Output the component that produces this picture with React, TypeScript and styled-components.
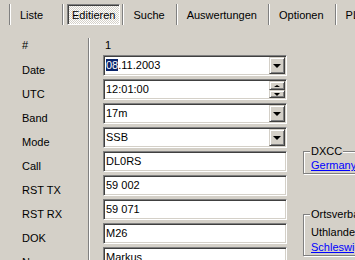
import * as React from 'react';
import styled, { createGlobalStyle } from 'styled-components';

const FACE = '#D4D0C8';
const SHADOW = '#808080';
const DARK = '#404040';

const GlobalStyle = createGlobalStyle`
  html, body {
    margin: 0;
    padding: 0;
    background: ${FACE};
  }
  body {
    font-family: "Liberation Sans", Arial, sans-serif;
    font-size: 11px;
    color: #000;
  }
`;

const Page = styled.div`
  width: 355px;
  height: 260px;
  overflow: hidden;
  background: ${FACE};
  display: flex;
  flex-direction: column;
`;

const TabBar = styled.div`
  flex: none;
  display: flex;
  align-items: stretch;
  height: 21px;
  margin: 4px 0 13px;
  padding-left: 9px;
  white-space: nowrap;
`;

const Tab = styled.div<{ $active?: boolean }>`
  flex: none;
  box-sizing: border-box;
  min-width: 53px;
  display: flex;
  align-items: stretch;
  border-left: 1px solid ${SHADOW};
  box-shadow: inset 1px 0 0 #fff;
  padding: ${p => (p.$active ? '0 2px 0 4px' : '0 11px 0 10px')};
`;

const TabLabel = styled.span<{ $active?: boolean }>`
  display: flex;
  align-items: center;
  ${p =>
    p.$active &&
    `
    padding: 0 4px;
    border: 1px solid;
    border-color: ${SHADOW} #fff #fff ${SHADOW};
    box-shadow: inset 1px 1px 0 ${DARK};
    background-color: #fff;
    background-image: conic-gradient(${FACE} 25%, #fff 0 50%, ${FACE} 0 75%, #fff 0);
    background-size: 2px 2px;
  `}
`;

const Form = styled.div`
  flex: none;
  display: grid;
  grid-template-columns: 89px 198px 1fr;
  grid-template-rows: 14px repeat(9, 24px);
`;

const Label = styled.div<{ $head?: boolean }>`
  border-right: 1px solid ${SHADOW};
  box-shadow: 1px 0 0 #fff;
  padding: ${p => (p.$head ? '1px' : '12px')} 0 0 22px;
  line-height: 13px;
`;

const Value = styled.div`
  padding: 1px 0 0 16px;
  line-height: 13px;
`;

const FieldCell = styled.div`
  padding: 3px 0 0 14px;
`;

const Field = styled.div`
  box-sizing: border-box;
  height: 21px;
  display: flex;
  align-items: stretch;
  padding: 1px;
  background: #fff;
  border: 1px solid;
  border-color: ${SHADOW} #fff #fff ${SHADOW};
  box-shadow: inset 1px 1px 0 ${DARK}, inset -1px -1px 0 ${FACE};
`;

const FieldText = styled.span`
  flex: 1;
  padding-left: 1px;
  line-height: 17px;
  white-space: nowrap;
`;

const Selected = styled.span`
  background: #0a246a;
  color: #fff;
`;

const Raised = styled.div`
  box-sizing: border-box;
  width: 16px;
  display: flex;
  align-items: center;
  justify-content: center;
  background: ${FACE};
  border: 1px solid;
  border-color: ${FACE} ${DARK} ${DARK} ${FACE};
  box-shadow: inset 1px 1px 0 #fff, inset -1px -1px 0 ${SHADOW};
`;

const Spin = styled.div`
  width: 16px;
  display: flex;
  flex-direction: column;
`;

const SpinHalf = styled(Raised)`
  flex: 1;
  width: 16px;
`;

const Arrow = styled.span<{ $size: number; $up?: boolean }>`
  width: 0;
  height: 0;
  border-left: ${p => p.$size}px solid transparent;
  border-right: ${p => p.$size}px solid transparent;
  ${p =>
    p.$up
      ? `border-bottom: ${p.$size - 1}px solid #000;`
      : `border-top: ${p.$size}px solid #000;`}
  margin-top: 1px;
`;

const Side = styled.div`
  grid-column: 3;
  grid-row: 1 / -1;
  padding-left: 16px;
  display: flex;
  flex-direction: column;
`;

const Group = styled.fieldset<{ $top: number }>`
  width: 120px;
  flex: none;
  margin: ${p => p.$top}px 0 0;
  padding: 0 0 0 7px;
  border: 1px solid ${SHADOW};
  box-shadow: inset 1px 1px 0 #fff, 1px 1px 0 #fff;
  line-height: 15px;
  white-space: nowrap;
`;

const Legend = styled.legend`
  padding: 0 1px;
  margin-left: -1px;
  line-height: 13px;
  background: ${FACE};
`;

const GroupBody = styled.div<{ $pad?: number }>`
  padding-top: ${p => p.$pad || 0}px;
`;

const Link = styled.div`
  color: #0000ff;
  text-decoration: underline;
`;

const ComboButton = () => (
  <Raised>
    <Arrow $size={4} />
  </Raised>
);

const SpinButton = () => (
  <Spin>
    <SpinHalf>
      <Arrow $size={3} $up />
    </SpinHalf>
    <SpinHalf>
      <Arrow $size={3} />
    </SpinHalf>
  </Spin>
);

type Row = { label: string; value: React.ReactNode; kind?: 'combo' | 'spin' };

const rows: Row[] = [
  { label: 'Date', value: <><Selected>08</Selected>.11.2003</>, kind: 'combo' },
  { label: 'UTC', value: '12:01:00', kind: 'spin' },
  { label: 'Band', value: '17m', kind: 'combo' },
  { label: 'Mode', value: 'SSB', kind: 'combo' },
  { label: 'Call', value: 'DL0RS' },
  { label: 'RST TX', value: '59 002' },
  { label: 'RST RX', value: '59 071' },
  { label: 'DOK', value: 'M26' },
  { label: 'Name', value: 'Markus' },
];

const tabs = ['Liste', 'Editieren', 'Suche', 'Auswertungen', 'Optionen', 'PLZ'];

export default function App() {
  return (
    <Page>
      <GlobalStyle />
      <TabBar>
        {tabs.map(t => (
          <Tab key={t} $active={t === 'Editieren'}>
            <TabLabel $active={t === 'Editieren'}>{t}</TabLabel>
          </Tab>
        ))}
      </TabBar>
      <Form>
        <Label $head>#</Label>
        <Value>1</Value>
        <Side>
          <Group $top={107}>
            <Legend>DXCC</Legend>
            <GroupBody>
              <Link>Germany, DL</Link>
            </GroupBody>
          </Group>
          <Group $top={34}>
            <Legend>Ortsverband</Legend>
            <GroupBody $pad={4}>
              <div>Uthlande</div>
              <Link>Schleswig-Holstein</Link>
            </GroupBody>
          </Group>
        </Side>
        {rows.map(r => (
          <React.Fragment key={r.label}>
            <Label>{r.label}</Label>
            <FieldCell>
              <Field>
                <FieldText>{r.value}</FieldText>
                {r.kind === 'combo' && <ComboButton />}
                {r.kind === 'spin' && <SpinButton />}
              </Field>
            </FieldCell>
          </React.Fragment>
        ))}
      </Form>
    </Page>
  );
}
